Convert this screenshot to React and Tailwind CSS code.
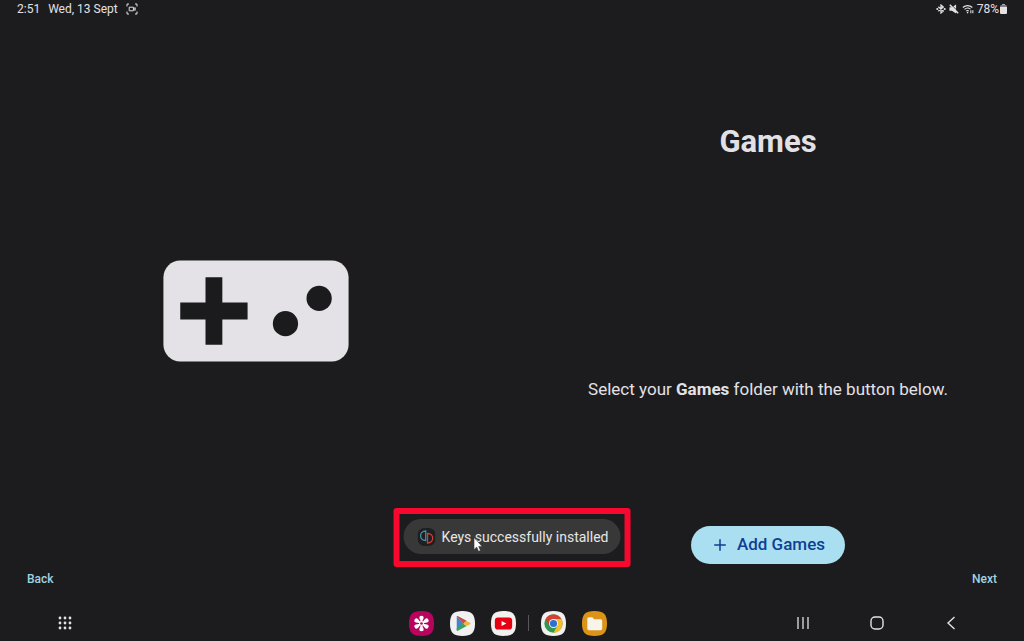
import { Plus } from 'lucide-react';

const CaptureIcon = () => (
  <svg viewBox="0 0 12 12" className="w-3 h-3" fill="none" stroke="currentColor" strokeWidth="1">
    <path d="M1 3.5V1h2M9 1h2v2.5M11 8.5V11H9M3 11H1V8.5" />
    <path d="M3.2 4.2h4.2v3.6H3.2zM7.6 5.6l1.6-.9v2.6l-1.6-.9" />
  </svg>
);

const BluetoothIcon = () => (
  <svg viewBox="0 0 12 12" className="w-2.5 h-2.5" fill="none" stroke="currentColor" strokeWidth="1.5">
    <path d="M2.8 3.2 8.8 8.4 6 10.8V1.2l2.8 2.4-6 5.2" />
    <circle cx="1.6" cy="6" r="1.3" fill="currentColor" stroke="none" />
    <circle cx="10.4" cy="6" r="1.3" fill="currentColor" stroke="none" />
  </svg>
);

const MuteIcon = () => (
  <svg viewBox="0 0 12 12" className="w-2.5 h-2.5">
    <path d="M.5 3.800h3L8.500.5v11l-5-3.300h-3z" fill="currentColor" />
    <path d="m2 .2 10 10" stroke="#1c1c1e" strokeWidth="1.200" />
    <path d="m1 1 10 10" stroke="currentColor" strokeWidth="1.800" />
  </svg>
);

const WifiIcon = () => (
  <svg viewBox="0 0 14 12" className="w-3 h-2.5" fill="none" stroke="currentColor" strokeWidth="1.3">
    <path d="M.8 4.2a8.4 8.4 0 0 1 11.4 0M2.8 6.4a5.6 5.6 0 0 1 7.2-.2M4.8 8.5a2.8 2.8 0 0 1 3.2-.2" />
    <circle cx="6.5" cy="10.3" r="1" fill="currentColor" stroke="none" />
    <path d="M10.4 7.5V11M12.8 7.5V11" />
  </svg>
);

const BatteryIcon = () => (
  <svg viewBox="0 0 7 10" className="w-[7px] h-2.5" fill="currentColor">
    <path d="M2 0h3v1H2z" opacity=".7" />
    <rect y="1" width="7" height="9" rx="1.5" opacity=".5" />
    <path d="M0 3h7v5.5A1.5 1.5 0 0 1 5.5 10h-4A1.5 1.5 0 0 1 0 8.5z" />
  </svg>
);

const ControllerIcon = () => (
  <svg viewBox="0 0 24 24" className="w-[202px] h-[202px] text-[#e4e2e6]">
    <rect x="1" y="6" width="22" height="12" rx="2" fill="currentColor" />
    <path d="M6 8h2v3h3v2H8v3H6v-3H3v-2h3z" fill="#1b1b1d" />
    <circle cx="15.5" cy="13.5" r="1.5" fill="#1b1b1d" />
    <circle cx="19.5" cy="10.5" r="1.5" fill="#1b1b1d" />
  </svg>
);

const YuzuIcon = () => (
  <svg viewBox="0 0 18 18" className="w-[18px] h-[18px]" fill="none" strokeWidth="1.3">
    <rect width="18" height="18" rx="7" fill="#1f1f21" />
    <path d="M8.200 3v9.500C1.300 12.500 1.300 3 8.200 3z" stroke="#3f8fa8" />
    <path d="M10 5.500V15c6.900 0 6.900-9.500 0-9.500z" stroke="#c9403f" />
  </svg>
);

const CursorIcon = () => (
  <svg viewBox="0 0 9 15" className="absolute left-[74px] top-[23px] w-[9px] h-[15px]">
    <path d="M.5.5v12l2.7-2.4 1.8 4.2 1.900-.8-1.800-4.100h3.400z" fill="#fff" stroke="#333" strokeWidth=".5" />
  </svg>
);

const TILE = 'M13 0C22.500 0 26 3.500 26 13S22.500 26 13 26 0 22.500 0 13 3.500 0 13 0z';

const GalleryIcon = () => (
  <svg viewBox="0 0 26 26" className="w-full h-full">
    <path d={TILE} fill="#b9045f" />
    {[0, 60, 120, 180, 240, 300].map((angle) => (
      <path
        key={angle}
        d="M12.400 11.500 10.900 7.500a2.150 2.150 0 1 1 4.200 0l-1.500 4z"
        fill="#fff"
        transform={`rotate(${angle} 13 13)`}
      />
    ))}
    <circle cx="13" cy="13" r="2.5" fill="#fff" />
    <circle cx="13" cy="13" r="1.4" fill="#b9045f" />
  </svg>
);

const PlayStoreIcon = () => (
  <svg viewBox="0 0 26 26" className="w-full h-full">
    <path d={TILE} fill="#f1f1f1" />
    <path d="M7 5.800v14.400L14 13z" fill="#4285c8" />
    <path d="M7 5.800c.3-.5 1-.6 1.600-.2l8.400 4.600L14 13z" fill="#4285c8" />
    <path d="M7 20.200c.3.5 1 .6 1.600.2l8.400-4.600L14 13 7 18z" fill="#35a35c" />
    <path d="M7 5.800c.3-.5 1-.6 1.600-.2l8.400 4.600L14 13z" fill="#d94738" />
    <path d="m17 10.200 3.800 2c.8.5.8 1.200 0 1.600l-3.800 2L14 13z" fill="#f2b632" />
  </svg>
);

const YoutubeIcon = () => (
  <svg viewBox="0 0 26 26" className="w-full h-full">
    <path d={TILE} fill="#f1f1f1" />
    <rect x="4" y="6.8" width="18" height="12.4" rx="3.2" fill="#e60012" />
    <path d="m11 10.400 5 2.600-5 2.600z" fill="#fff" />
  </svg>
);

const ChromeIcon = () => (
  <svg viewBox="0 0 26 26" className="w-full h-full">
    <path d={TILE} fill="#f1f1f1" />
    <circle cx="13" cy="13" r="9.500" fill="#2f9950" />
    <path d="M13 8.300h8.200A9.500 9.500 0 0 1 13 22.500l4.100-7.200z" fill="#f4bd2b" />
    <path d="M21.200 8.300H13a4.700 4.700 0 0 0-4.100 7L4.800 8.200a9.500 9.500 0 0 1 16.400.1z" fill="#d8402f" />
    <circle cx="13" cy="13" r="4.7" fill="#f1f1f1" />
    <circle cx="13" cy="13" r="3.7" fill="#2b71cf" />
  </svg>
);

const FilesIcon = () => (
  <svg viewBox="0 0 26 26" className="w-full h-full">
    <path d={TILE} fill="#dc9418" />
    <path d="M5.500 8.200A1.700 1.700 0 0 1 7.200 6.500h3.500l2 2h6.600a1.700 1.700 0 0 1 1.700 1.700v8a1.700 1.700 0 0 1-1.700 1.700H7.200a1.700 1.700 0 0 1-1.700-1.700z" fill="#f8f4ec" />
  </svg>
);

const AppsIcon = () => (
  <svg viewBox="0 0 14 14" className="w-3.5 h-3.5" fill="currentColor">
    {[2, 7, 12].map((y) => [2, 7, 12].map((x) => <circle key={`${x}-${y}`} cx={x} cy={y} r="1.4" />))}
  </svg>
);

const DockButton = ({ label, children }) => (
  <button type="button" aria-label={label} className="w-[25px] h-[25px]">
    {children}
  </button>
);

const App = () => {
  return (
    <div className="relative min-h-screen flex flex-col bg-[#1c1c1e] text-[#e3e1e5] font-['Roboto',sans-serif]">
      {/* Status Bar */}
      <header className="h-[18px] flex items-center justify-between pl-[17px] pr-[17px] text-xs">
        <div className="flex items-center gap-2">
          <span>2:51</span>
          <span>Wed, 13 Sept</span>
          <CaptureIcon />
        </div>
        <div className="flex items-center gap-[3px]">
          <BluetoothIcon />
          <MuteIcon />
          <WifiIcon />
          <div className="flex items-center gap-px">
            <span>78%</span>
            <BatteryIcon />
          </div>
        </div>
      </header>

      {/* Setup Page */}
      <main className="flex-1 grid grid-cols-2">
        <div className="flex items-center justify-center pt-10">
          <ControllerIcon />
        </div>
        <div className="flex flex-col items-center">
          <div className="flex-1 flex items-center">
            <h1 className="text-[31px] leading-10 font-bold">Games</h1>
          </div>
          <div className="flex-1 flex items-center">
            <p className="text-[17px] leading-7">
              Select your <strong className="font-bold">Games</strong> folder with the button below.
            </p>
          </div>
          <div className="h-[52px] pt-[14px]">
            <button
              type="button"
              className="h-[38px] flex items-center gap-2 px-5 rounded-full bg-[#a9dff0] text-[#0f3f94] text-[17px] font-medium"
            >
              <Plus className="w-[18px] h-[18px]" strokeWidth={2} />
              Add Games
            </button>
          </div>
        </div>
      </main>

      {/* Page Navigation */}
      <div className="h-[30px] mb-[11px] px-[27px] flex items-center justify-between text-xs font-medium text-[#a0d3e2]">
        <button type="button">Back</button>
        <button type="button">Next</button>
      </div>

      {/* Taskbar */}
      <nav className="h-9 pr-2 grid grid-cols-[1fr_auto_1fr] items-center">
        <div className="flex pl-[58px]">
          <button type="button" aria-label="Apps">
            <AppsIcon />
          </button>
        </div>
        <div className="flex items-center gap-4">
          <DockButton label="Gallery">
            <GalleryIcon />
          </DockButton>
          <DockButton label="Play Store">
            <PlayStoreIcon />
          </DockButton>
          <DockButton label="YouTube">
            <YoutubeIcon />
          </DockButton>
          <div className="flex items-center gap-3">
            <div className="-ml-1 w-px h-4 bg-[#58585a]" />
            <DockButton label="Chrome">
              <ChromeIcon />
            </DockButton>
          </div>
          <DockButton label="Files">
            <FilesIcon />
          </DockButton>
        </div>
        <div className="flex justify-end gap-[60px] pr-[58px]">
          <button type="button" aria-label="Recents">
            <svg viewBox="0 0 14 14" className="w-3.5 h-3.5" stroke="currentColor" strokeWidth="1.3">
              <path d="M2 1v12M7 1v12M12 1v12" />
            </svg>
          </button>
          <button type="button" aria-label="Home">
            <svg viewBox="0 0 14 14" className="w-3.5 h-3.5" fill="none" stroke="currentColor" strokeWidth="1.4">
              <rect x="1" y="1" width="12" height="12" rx="4" />
            </svg>
          </button>
          <button type="button" aria-label="Go back">
            <svg viewBox="0 0 14 14" className="w-3.5 h-3.5" fill="none" stroke="currentColor" strokeWidth="1.4">
              <path d="M10.500 1 4 7l6.500 6" />
            </svg>
          </button>
        </div>
      </nav>

      {/* Toast */}
      <div className="absolute bottom-[74px] left-1/2 -translate-x-1/2 px-1 pt-[5px] pb-[7px] border-[6px] border-[#f8082f] rounded-[3px]">
        <div
          role="status"
          className="h-[35px] flex items-center gap-1.5 pl-[14px] pr-3 rounded-full bg-[#383838] text-sm text-[#e6e6e6] whitespace-nowrap"
        >
          <YuzuIcon />
          Keys successfully installed
        </div>
        <CursorIcon />
      </div>
    </div>
  );
};

export default App;
